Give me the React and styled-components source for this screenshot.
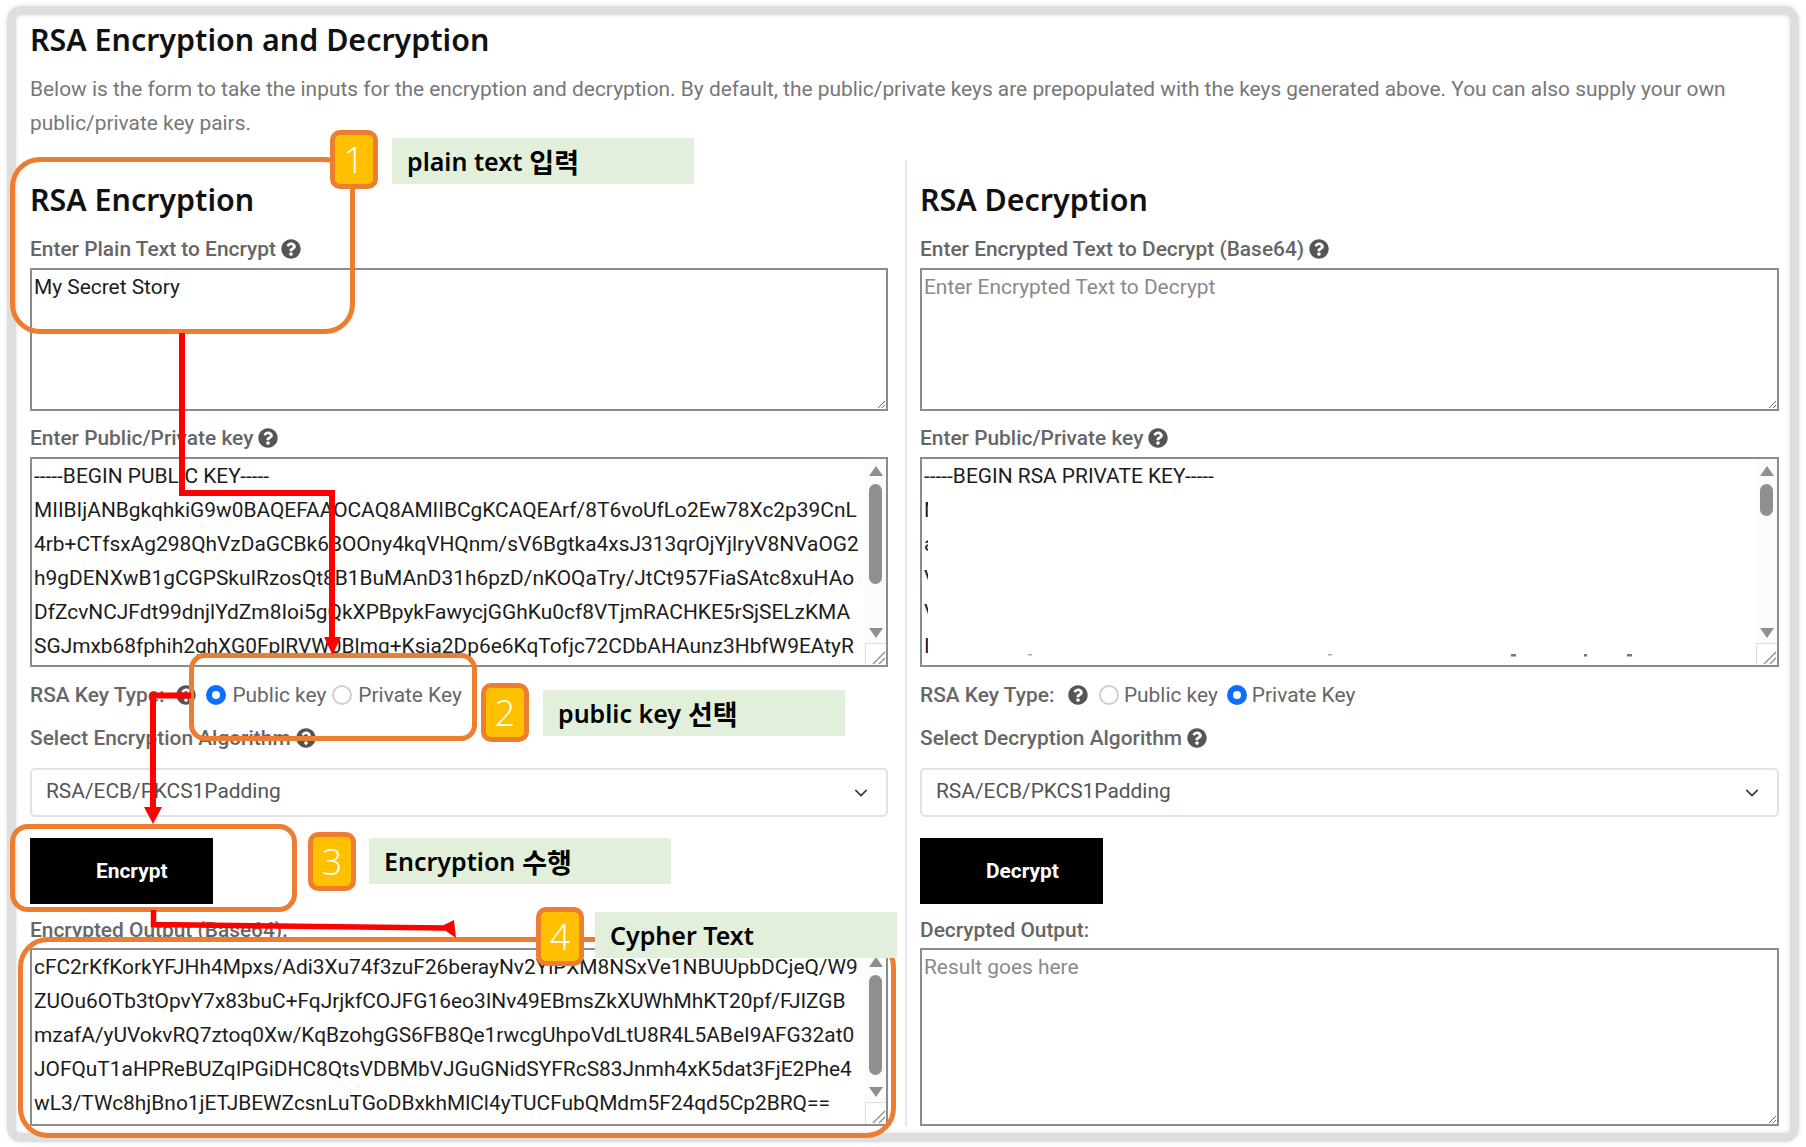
import styled, { createGlobalStyle } from "styled-components";
import { FaQuestionCircle } from "react-icons/fa";

const publicKey = `-----BEGIN PUBLIC KEY-----
MIIBIjANBgkqhkiG9w0BAQEFAAOCAQ8AMIIBCgKCAQEArf/8T6voUfLo2Ew78Xc2p39CnL
4rb+CTfsxAg298QhVzDaGCBk6BOOny4kqVHQnm/sV6Bgtka4xsJ313qrOjYjlryV8NVaOG2
h9gDENXwB1gCGPSkuIRzosQt8B1BuMAnD31h6pzD/nKOQaTry/JtCt957FiaSAtc8xuHAo
DfZcvNCJFdt99dnjlYdZm8Ioi5gQkXPBpykFawycjGGhKu0cf8VTjmRACHKE5rSjSELzKMA
SGJmxb68fphih2ghXG0FplRVW0Blmg+Ksja2Dp6e6KqTofjc72CDbAHAunz3HbfW9EAtyR`;

const privateKey = `-----BEGIN RSA PRIVATE KEY-----
M
a
V
V
I`;

const cipherText = `cFC2rKfKorkYFJHh4Mpxs/Adi3Xu74f3zuF26berayNv2YiPXM8NSxVe1NBUUpbDCjeQ/W9
ZUOu6OTb3tOpvY7x83buC+FqJrjkfCOJFG16eo3INv49EBmsZkXUWhMhKT20pf/FJIZGB
mzafA/yUVokvRQ7ztoq0Xw/KqBzohgGS6FB8Qe1rwcgUhpoVdLtU8R4L5ABeI9AFG32at0
JOFQuT1aHPReBUZqIPGiDHC8QtsVDBMbVJGuGNidSYFRcS83Jnmh4xK5dat3FjE2Phe4
wL3/TWc8hjBno1jETJBEWZcsnLuTGoDBxkhMlCl4yTUCFubQMdm5F24qd5Cp2BRQ==`;

const GlobalStyle = createGlobalStyle`
  html, body {
    margin: 0;
    background: #fff;
    font-family: Roboto, "Liberation Sans", sans-serif;
  }
`;

const Page = styled.div`
  position: relative;
  box-sizing: border-box;
  width: 1806px;
  height: 1147px;
  padding: 6px 7px 5px;
  overflow: hidden;
`;

const Card = styled.div`
  box-sizing: border-box;
  height: 1136px;
  border: 9px solid #dedede;
  border-radius: 14px;
  box-shadow: 0 0 4px #dedede, inset 0 0 4px #dedede;
  padding: 4px 10px 0 14px;
`;

const Title = styled.h2`
  margin: 0;
  font-family: "Noto Sans", sans-serif;
  font-size: 30.4px;
  line-height: 42px;
  font-weight: 600;
  color: #111;
`;

const Intro = styled.p`
  margin: 11px 0 0;
  font-size: 20.9px;
  line-height: 34px;
  color: #777;
`;

const Columns = styled.div`
  display: grid;
  grid-template-columns: 875px 875px;
  margin-top: 20px;
`;

const Column = styled.section`
  display: flex;
  flex-direction: column;
  gap: 15px;
  padding-top: 19px;
`;

const LeftColumn = styled(Column)`
  padding-right: 17px;
`;

const RightColumn = styled(Column)`
  padding-left: 13px;
  padding-right: 1px;
  border-left: 2px solid #e8e8e8;
`;

const Heading = styled.h3`
  margin: 0 0 1px;
  font-family: "Noto Sans", sans-serif;
  font-size: 30.4px;
  line-height: 42px;
  font-weight: 600;
  color: #111;
`;

const Field = styled.div`
  display: flex;
  flex-direction: column;
  gap: ${(p) => p.$gap || 7}px;
`;

const Label = styled.div`
  display: flex;
  align-items: center;
  gap: 5px;
  font-size: 20.9px;
  line-height: 24px;
  font-weight: 500;
  color: #666;
`;

const Help = styled(FaQuestionCircle)`
  flex: none;
  width: 20px;
  height: 20px;
  color: #555;
`;

const TextBox = styled.div`
  position: relative;
  height: ${(p) => p.$height}px;
`;

const Area = styled.textarea`
  display: block;
  box-sizing: border-box;
  width: 100%;
  height: 100%;
  margin: 0;
  padding: 0 2px;
  border: 2px solid #8c8c8c;
  border-radius: 0;
  outline: none;
  background: #fff;
  font-family: Roboto, "Liberation Sans", sans-serif;
  font-size: 20.9px;
  line-height: 34px;
  color: #1c1c1c;
  overflow: hidden;
  white-space: ${(p) => (p.$scroll ? "pre" : "pre-wrap")};
  resize: ${(p) => (p.$scroll ? "none" : "vertical")};

  &::placeholder {
    color: #8a8a8a;
    opacity: 1;
  }
`;

const ScrollTrack = styled.div`
  position: absolute;
  top: 2px;
  right: 2px;
  bottom: 2px;
  width: 21px;
  background: #fbfbfb;
`;

const ArrowUp = styled.div`
  position: absolute;
  top: 7px;
  left: 4px;
  border-left: 7px solid transparent;
  border-right: 7px solid transparent;
  border-bottom: 10px solid #8f8f8f;
`;

const ArrowDown = styled.div`
  position: absolute;
  bottom: 27px;
  left: 4px;
  border-left: 7px solid transparent;
  border-right: 7px solid transparent;
  border-top: 10px solid #8f8f8f;
`;

const Thumb = styled.div`
  position: absolute;
  top: 25px;
  left: 4px;
  width: 13px;
  height: ${(p) => p.$height}px;
  border-radius: 7px;
  background: #8f8f8f;
`;

const Corner = styled.div`
  position: absolute;
  right: 0;
  bottom: 0;
  box-sizing: border-box;
  width: 21px;
  height: 22px;
  border-left: 1px solid #ddd;
  border-top: 1px solid #ddd;
  background: #fff;
  display: flex;
  align-items: flex-end;
  justify-content: flex-end;
`;

const Redaction = styled.div`
  position: absolute;
  top: 37px;
  left: 8px;
  right: 24px;
  bottom: 2px;
  background: #fff;
`;

const Radios = styled.div`
  display: flex;
  align-items: center;
  box-sizing: border-box;
  height: 29px;
  padding: 1px 0 4px;
  font-size: 20.9px;
  font-weight: 500;
  color: #666;
`;

const KeyTypeHelp = styled(Help)`
  margin-left: ${(p) => (p.$spread ? 13.5 : 12)}px;
  margin-right: ${(p) => (p.$spread ? 11 : 10)}px;
`;

const RadioOption = styled.label`
  display: flex;
  align-items: center;
  gap: ${(p) => (p.$spread ? 5 : 6)}px;
  margin-right: ${(p) => (p.$spread ? 9 : 6)}px;
  font-weight: 400;
  color: #666;
`;

const RadioInput = styled.input`
  appearance: none;
  box-sizing: border-box;
  flex: none;
  width: 20px;
  height: 20px;
  margin: 0;
  border-radius: 50%;
  border: 2px solid #cfcfcf;
  background: #fff;

  &:checked {
    border: 6px solid #0d6efd;
  }
`;

const SelectBox = styled.div`
  position: relative;
  height: 49px;
`;

const Select = styled.select`
  appearance: none;
  box-sizing: border-box;
  width: 100%;
  height: 100%;
  padding: 0 14px 4px;
  border: 2px solid #dfe2e6;
  border-radius: 5px;
  background: #fff;
  font-family: Roboto, "Liberation Sans", sans-serif;
  font-size: 20.9px;
  color: #555;
`;

const Chevron = styled.svg`
  position: absolute;
  top: 18px;
  right: 20px;
  width: 14px;
  height: 14px;
  pointer-events: none;
`;

const ActionButton = styled.button`
  display: block;
  box-sizing: border-box;
  width: 183px;
  height: 66px;
  margin-top: 6px;
  padding: 0 0 0 66px;
  border: none;
  background: #000;
  color: #fff;
  font-family: Roboto, "Liberation Sans", sans-serif;
  font-size: 20.9px;
  font-weight: 700;
  text-align: left;
`;

const OutputField = styled(Field)`
  margin-top: -1px;
`;

/* annotations drawn on top of the captured page */
const Outline = styled.div`
  position: absolute;
  box-sizing: border-box;
  left: ${(p) => p.$x}px;
  top: ${(p) => p.$y}px;
  width: ${(p) => p.$w}px;
  height: ${(p) => p.$h}px;
  border: 5px solid #ed7d31;
  border-radius: ${(p) => p.$radius}px;
  pointer-events: none;
`;

const Badge = styled.div`
  position: absolute;
  box-sizing: border-box;
  left: ${(p) => p.$x}px;
  top: ${(p) => p.$y}px;
  width: 48px;
  height: 59px;
  border: 5px solid #ed7d31;
  border-radius: 10px;
  background: #ffc000;
  color: #fff;
  display: flex;
  align-items: center;
  justify-content: center;
  font-family: "Open Sans", sans-serif;
  font-size: 36px;
  font-weight: 300;
`;

const Note = styled.div`
  position: absolute;
  box-sizing: border-box;
  left: ${(p) => p.$x}px;
  top: ${(p) => p.$y}px;
  width: 302px;
  height: 46px;
  padding-left: 15px;
  background: #e2efda;
  display: flex;
  align-items: center;
  gap: 7px;
  font-family: "Noto Sans", "Noto Sans CJK KR", sans-serif;
  font-size: 25px;
  font-weight: 600;
  color: #000;
`;

const Hangul = styled.span`
  font-size: 27px;
`;

const Arrows = styled.svg`
  position: absolute;
  top: 0;
  left: 0;
  pointer-events: none;
`;

const Specks = styled.svg`
  position: absolute;
  left: 0;
  bottom: 8px;
`;

function Scrollbar({ thumb }) {
  return (
    <ScrollTrack>
      <ArrowUp />
      <Thumb $height={thumb} />
      <ArrowDown />
      <Corner>
        <svg width="16" height="16" viewBox="0 0 16 16">
          <path d="M3 15 15 3M9 15l6-6" stroke="#8a8a8a" strokeWidth="1.2" fill="none" />
        </svg>
      </Corner>
    </ScrollTrack>
  );
}

function AlgorithmSelect() {
  return (
    <SelectBox>
      <Select defaultValue="RSA/ECB/PKCS1Padding">
        <option>RSA/ECB/PKCS1Padding</option>
        <option>RSA/ECB/OAEPWithSHA-1AndMGF1Padding</option>
      </Select>
      <Chevron viewBox="0 0 16 16">
        <path d="M2 5l6 6 6-6" fill="none" stroke="#343a40" strokeWidth="1.8" strokeLinecap="round" strokeLinejoin="round" />
      </Chevron>
    </SelectBox>
  );
}

function App() {
  return (
    <Page>
      <GlobalStyle />
      <Card>
        <Title>RSA Encryption and Decryption</Title>
        <Intro>
          Below is the form to take the inputs for the encryption and decryption. By default, the public/private keys
          are prepopulated with the keys generated above. You can also supply your own public/private key pairs.
        </Intro>
        <Columns>
          <LeftColumn>
            <Heading>RSA Encryption</Heading>
            <Field>
              <Label>Enter Plain Text to Encrypt <Help /></Label>
              <TextBox $height={143}>
                <Area readOnly defaultValue="My Secret Story" />
              </TextBox>
            </Field>
            <Field>
              <Label>Enter Public/Private key <Help /></Label>
              <TextBox $height={210}>
                <Area readOnly $scroll defaultValue={publicKey} />
                <Scrollbar thumb={100} />
              </TextBox>
            </Field>
            <Radios>
              RSA Key Type:
              <KeyTypeHelp />
              <RadioOption><RadioInput type="radio" name="enc" defaultChecked />Public key</RadioOption>
              <RadioOption><RadioInput type="radio" name="enc" />Private Key</RadioOption>
            </Radios>
            <Field $gap={18}>
              <Label>Select Encryption Algorithm <Help /></Label>
              <AlgorithmSelect />
            </Field>
            <ActionButton>Encrypt</ActionButton>
            <OutputField $gap={6}>
              <Label>Encrypted Output (Base64):</Label>
              <TextBox $height={178}>
                <Area readOnly $scroll defaultValue={cipherText} />
                <Scrollbar thumb={100} />
              </TextBox>
            </OutputField>
          </LeftColumn>
          <RightColumn>
            <Heading>RSA Decryption</Heading>
            <Field>
              <Label>Enter Encrypted Text to Decrypt (Base64) <Help /></Label>
              <TextBox $height={143}>
                <Area readOnly placeholder="Enter Encrypted Text to Decrypt" />
              </TextBox>
            </Field>
            <Field>
              <Label>Enter Public/Private key <Help /></Label>
              <TextBox $height={210}>
                <Area readOnly $scroll defaultValue={privateKey} />
                <Redaction>
                  <Specks width="730" height="3">
                    <rect x="100" width="4" height="1.5" fill="#aaa" />
                    <rect x="400" width="4" height="1.5" fill="#aaa" />
                    <rect x="583" width="5" height="2.5" fill="#777" />
                    <rect x="656" width="3" height="2.5" fill="#777" />
                    <rect x="699" width="5" height="2.5" fill="#777" />
                  </Specks>
                </Redaction>
                <Scrollbar thumb={32} />
              </TextBox>
            </Field>
            <Radios>
              RSA Key Type:
              <KeyTypeHelp $spread />
              <RadioOption $spread><RadioInput type="radio" name="dec" />Public key</RadioOption>
              <RadioOption $spread><RadioInput type="radio" name="dec" defaultChecked />Private Key</RadioOption>
            </Radios>
            <Field $gap={18}>
              <Label>Select Decryption Algorithm <Help /></Label>
              <AlgorithmSelect />
            </Field>
            <ActionButton>Decrypt</ActionButton>
            <OutputField $gap={6}>
              <Label>Decrypted Output:</Label>
              <TextBox $height={178}>
                <Area readOnly placeholder="Result goes here" />
              </TextBox>
            </OutputField>
          </RightColumn>
        </Columns>
      </Card>

      <Outline $x={10} $y={157} $w={345} $h={177} $radius={30} />
      <Outline $x={189} $y={653} $w={288} $h={88} $radius={16} />
      <Outline $x={10} $y={824} $w={287} $h={88} $radius={18} />
      <Outline $x={18} $y={937} $w={878} $h={201} $radius={30} />

      <Arrows width="1806" height="1147" viewBox="0 0 1806 1147">
        <path d="M182 333V493H332V640" fill="none" stroke="#f00" strokeWidth="6" />
        <path d="M324 637h17l-8.500 18z" fill="#f00" />
        <path d="M191 695.500H153V810" fill="none" stroke="#f00" strokeWidth="6" />
        <path d="M144 807h18l-9 17z" fill="#f00" />
        <path d="M153.500 910V924.500L445 928" fill="none" stroke="#f00" strokeWidth="5.500" />
        <path d="M454 920l2 18-16-11z" fill="#f00" />
      </Arrows>

      <Badge $x={330} $y={130}>1</Badge>
      <Note $x={392} $y={138}>plain text <Hangul>입력</Hangul></Note>
      <Badge $x={481} $y={683}>2</Badge>
      <Note $x={543} $y={690}>public key <Hangul>선택</Hangul></Note>
      <Badge $x={308} $y={832}>3</Badge>
      <Note $x={369} $y={838}>Encryption <Hangul>수행</Hangul></Note>
      <Note $x={595} $y={912}>Cypher Text</Note>
      <Badge $x={536} $y={907}>4</Badge>
    </Page>
  );
}

export default App;
